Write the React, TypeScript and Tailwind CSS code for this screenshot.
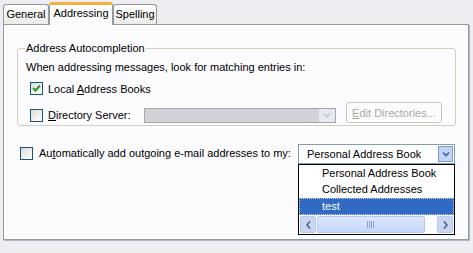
import React from 'react';

const font = { fontFamily: '"Liberation Sans", Arial, sans-serif' };

function Check({ checked }: { checked?: boolean }) {
  return (
    <span className="flex h-[13px] w-[13px] shrink-0 items-center justify-center border border-[#1c5180] bg-gradient-to-br from-[#dcdcd7] to-white">
      {checked && (
        <svg width="9" height="9" viewBox="0 0 9 9">
          <path d="M1 4 L3.5 6.5 L8 1.5" fill="none" stroke="#21a121" strokeWidth="2" />
        </svg>
      )}
    </span>
  );
}

function Arrow({ color }: { color: string }) {
  return (
    <svg width="8" height="5" viewBox="0 0 8 5">
      <path d="M1 0.5 L4 3.5 L7 0.5" fill="none" stroke={color} strokeWidth="1.6" />
    </svg>
  );
}

function Tab({ label, active, w }: { label: string; active?: boolean; w: string }) {
  if (active) {
    return (
      <div className={`relative z-10 -mb-px flex h-[23px] items-center justify-center rounded-t-[3px] border-x border-t-[3px] border-x-[#919b9c] border-t-[#f6b03c] bg-[#fcfcfe] pb-[3px] ${w}`}>
        {label}
      </div>
    );
  }
  return (
    <div className={`flex h-[20px] items-center justify-center rounded-t-[3px] border-x border-t border-[#919b9c] bg-gradient-to-b from-white to-[#ecebe6] ${w}`}>
      {label}
    </div>
  );
}

export default function App() {
  return (
    <div className="h-[253px] w-[473px] bg-[#eeedf1] pl-[3px] pt-[2px] text-[11px] text-black" style={font}>
      <div className="flex items-end">
        <Tab label="General" w="w-[46px]" />
        <Tab label="Addressing" active w="w-[64px]" />
        <Tab label="Spelling" w="w-[44px]" />
      </div>
      <div className="relative h-[216px] w-[466px] border border-[#919b9c] bg-[#fcfcfe] shadow-[1px_1px_0_#aeb6c8]">
        <div className="ml-[13px] mt-[15px] w-[439px]">
          <fieldset className="h-[86px] rounded-[3px] border border-[#d0d0bf] px-[8px] pt-[3px]">
            <legend className="-ml-[1px] px-[1px]">Address Autocompletion</legend>
            <div className="leading-[14px]">When addressing messages, look for matching entries in:</div>
            <div className="mt-[7px] flex items-center gap-[5px] pl-[4px]">
              <Check checked />
              <span>
                Local <u>A</u>ddress Books
              </span>
            </div>
            <div className="mt-[10px] flex items-center pl-[4px]">
              <Check />
              <span className="ml-[5px] w-[96px] whitespace-nowrap">
                <u>D</u>irectory Server:
              </span>
              <div className="flex h-[15px] w-[192px] items-center justify-end border border-[#a7a6aa] bg-[#d4d0d8]">
                <span className="flex h-[13px] w-[16px] items-center justify-center bg-[#e4e9f4]">
                  <Arrow color="#c9c7ba" />
                </span>
              </div>
              <div className="ml-[10px] mt-[-5px] flex h-[21px] w-[96px] items-center justify-center whitespace-nowrap rounded-[3px] border border-[#c9c7ba] text-[#aca899]">
                <span>
                  <u>E</u>dit Directories...
                </span>
              </div>
            </div>
          </fieldset>
        </div>
        <div className="ml-[16px] mt-[19px] flex items-center">
          <Check />
          <span className="ml-[6px] whitespace-nowrap">
            Au<u>t</u>omatically add outgoing e-mail addresses to my:
          </span>
        </div>
        <div className="absolute left-[294px] top-[119px] w-[157px]">
          <div className="flex h-[20px] items-center justify-between border border-[#7f9db9] bg-white pl-[8px] pr-px">
            <span>Personal Address Book</span>
            <span className="flex h-[16px] w-[15px] items-center justify-center border border-[#7f9db9] bg-[#c1d3fb]">
              <Arrow color="#4d6185" />
            </span>
          </div>
          <div className="w-[157px] border border-black bg-white">
            <div className="flex h-[16px] items-center pl-[23px]">Personal Address Book</div>
            <div className="flex h-[17px] items-center pl-[23px]">Collected Addresses</div>
            <div className="flex h-[17px] items-center border border-dotted border-[#c7d4ea] bg-[#316ac5] pl-[22px] text-white">test</div>
            <div className="flex h-[19px] items-center bg-[#fcfcfe] p-px">
              <span className="flex h-[17px] w-[16px] items-center justify-center rounded-[2px] border border-[#b5c9ef] bg-[#c8d6f4]">
                <svg width="5" height="8" viewBox="0 0 5 8"><path d="M4 0.5 L1 4 L4 7.5" fill="none" stroke="#4d6185" strokeWidth="1.6" /></svg>
              </span>
              <span className="ml-px flex h-[17px] w-[108px] items-center justify-center rounded-[2px] border border-[#b5c9ef] bg-gradient-to-b from-[#dde8fd] to-[#c4d6fb]">
                <svg width="8" height="7" viewBox="0 0 8 7"><path d="M0.5 0 V7 M2.5 0 V7 M4.5 0 V7 M6.5 0 V7" stroke="#8ca5d8" /></svg>
              </span>
              <span className="flex-1" />
              <span className="flex h-[17px] w-[16px] items-center justify-center rounded-[2px] border border-[#b5c9ef] bg-[#c8d6f4]">
                <svg width="5" height="8" viewBox="0 0 5 8"><path d="M1 0.5 L4 4 L1 7.5" fill="none" stroke="#4d6185" strokeWidth="1.6" /></svg>
              </span>
            </div>
          </div>
        </div>
      </div>
    </div>
  );
}
